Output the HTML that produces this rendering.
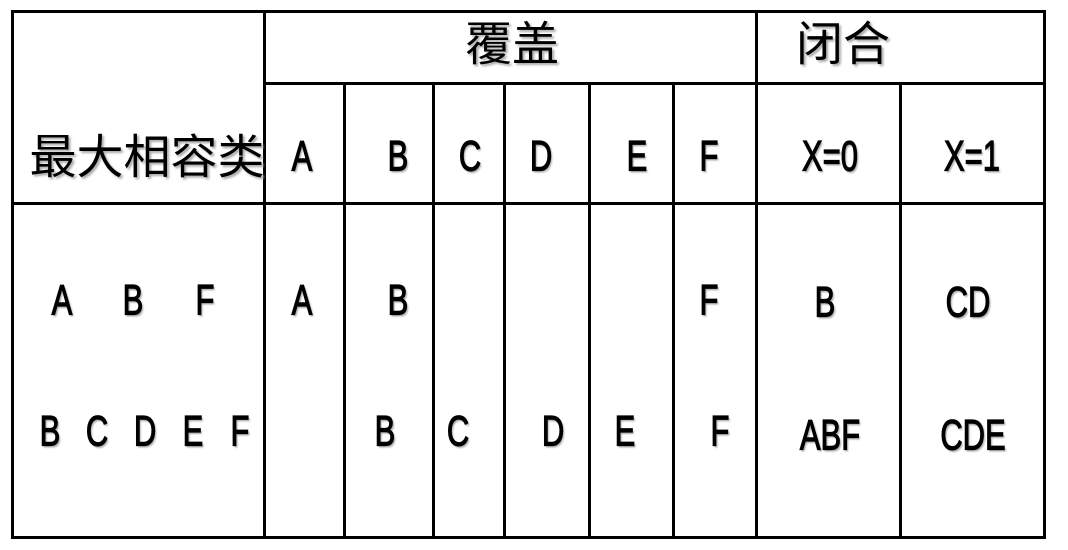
<!DOCTYPE html>
<html><head><meta charset="utf-8"><style>
body{margin:0;background:#fff;width:1068px;height:550px;position:relative;overflow:hidden}
.l{position:absolute;background:#000}
.t{position:absolute;font-family:"Liberation Sans",sans-serif;font-weight:normal;-webkit-text-stroke:1.2px #000;font-size:43px;line-height:1;transform:translate(-50%,-50%) scaleX(.72);white-space:nowrap;color:#000;text-shadow:2px 2px 2px #aaa}
.c{position:absolute;font-family:"Liberation Sans","Noto Sans CJK SC",sans-serif;font-size:47px;line-height:1;transform:translate(-50%,-50%);white-space:nowrap;text-shadow:2px 2px 2px #aaa}
</style></head><body>
<div class="l" style="left:11px;top:10px;width:1035px;height:3px"></div>
<div class="l" style="left:11px;top:536px;width:1035px;height:3px"></div>
<div class="l" style="left:11px;top:10px;width:3px;height:529px"></div>
<div class="l" style="left:1043px;top:10px;width:3px;height:529px"></div>
<div class="l" style="left:263px;top:82px;width:783px;height:3px"></div>
<div class="l" style="left:11px;top:202px;width:1035px;height:3px"></div>
<div class="l" style="left:263px;top:10px;width:3px;height:529px"></div>
<div class="l" style="left:343px;top:82px;width:3px;height:457px"></div>
<div class="l" style="left:432px;top:82px;width:3px;height:457px"></div>
<div class="l" style="left:503px;top:82px;width:3px;height:457px"></div>
<div class="l" style="left:588px;top:82px;width:3px;height:457px"></div>
<div class="l" style="left:672px;top:82px;width:3px;height:457px"></div>
<div class="l" style="left:755px;top:10px;width:3px;height:529px"></div>
<div class="l" style="left:899px;top:82px;width:3px;height:457px"></div>

<div class="c" style="left:147px;top:157px">最大相容类</div>
<div class="c" style="left:512px;top:44px">覆盖</div>
<div class="c" style="left:843px;top:44px">闭合</div>

<div class="t" style="left:302px;top:157px">A</div>
<div class="t" style="left:398px;top:157px">B</div>
<div class="t" style="left:470px;top:157px">C</div>
<div class="t" style="left:541px;top:157px">D</div>
<div class="t" style="left:637px;top:157px">E</div>
<div class="t" style="left:709px;top:157px">F</div>
<div class="t" style="left:830px;top:157px">X=0</div>
<div class="t" style="left:972px;top:157px">X=1</div>

<div class="t" style="left:62px;top:301px">A</div>
<div class="t" style="left:133px;top:301px">B</div>
<div class="t" style="left:205px;top:301px">F</div>
<div class="t" style="left:302px;top:301px">A</div>
<div class="t" style="left:398px;top:301px">B</div>
<div class="t" style="left:709px;top:301px">F</div>
<div class="t" style="left:825px;top:303px">B</div>
<div class="t" style="left:968px;top:303px">CD</div>

<div class="t" style="left:50px;top:432px">B</div>
<div class="t" style="left:97px;top:432px">C</div>
<div class="t" style="left:145px;top:432px">D</div>
<div class="t" style="left:193px;top:432px">E</div>
<div class="t" style="left:240px;top:432px">F</div>
<div class="t" style="left:385px;top:432px">B</div>
<div class="t" style="left:458px;top:432px">C</div>
<div class="t" style="left:553px;top:432px">D</div>
<div class="t" style="left:625px;top:432px">E</div>
<div class="t" style="left:720px;top:432px">F</div>
<div class="t" style="left:830px;top:436px">ABF</div>
<div class="t" style="left:973px;top:436px">CDE</div>
</body></html>
